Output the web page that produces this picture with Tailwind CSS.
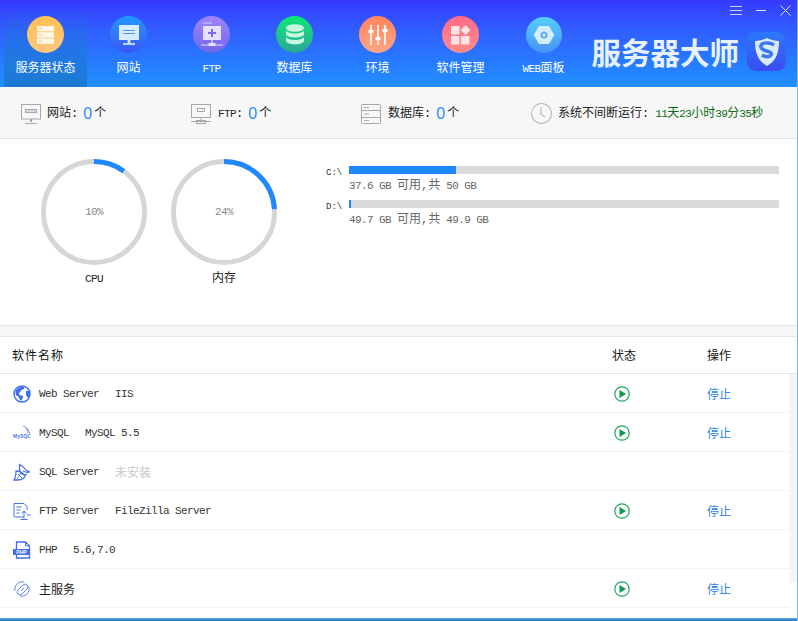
<!DOCTYPE html>
<html>
<head>
    <meta charset="utf-8">
    <title>服务器大师</title>
    <script src="https://cdn.jsdelivr.net/npm/@tailwindcss/browser@4"></script>
</head>
<body class="bg-white overflow-hidden">
<div class="w-[798px] h-[621px] relative flex flex-col border-r border-r-[#7fbdf0] font-['Liberation_Mono','Noto_Sans_CJK_SC',monospace] text-[11px] tracking-[-0.6px] text-[#333]">

    <!-- Header -->
    <div class="h-[87px] shrink-0 relative flex items-end pl-1 bg-gradient-to-b from-[#3838ff] to-[#2090ff] text-white">
        <div class="w-[83px] h-[80px] flex flex-col items-center pt-[9px] bg-gradient-to-b from-[#3838ff]/0 to-[#1c78d2]">
            <div class="w-[37px] h-[37px] rounded-full bg-gradient-to-b from-[#ffc04e] to-[#ffc680] flex items-center justify-center">
                <svg width="20" height="20" viewBox="0 0 20 20"><rect x="1" y="1" width="17" height="5.4" fill="#fff6e6"/><rect x="1" y="7.2" width="17" height="5.4" fill="#fff6e6"/><rect x="1" y="13.4" width="17" height="5.4" fill="#fff6e6"/><path d="M3 3.5h3M3 9.8h3M3 16h3" stroke="#ffc860" stroke-width="1"/></svg>
            </div>
            <span class="mt-[7px] text-[12px] tracking-normal leading-[18px]">服务器状态</span>
        </div>
        <div class="w-[83px] h-[80px] flex flex-col items-center pt-[9px]">
            <div class="w-[37px] h-[37px] rounded-full bg-gradient-to-b from-[#2098ff] to-[#3a55f5] flex items-center justify-center">
                <svg width="22" height="24" viewBox="0 0 22 24"><rect x="1" y="2" width="20" height="15" fill="#d8ecff"/><path d="M5 7.5h12M5 10.5h12" stroke="#4a90f0" stroke-width="1"/><rect x="9.6" y="17" width="2.8" height="3" fill="#d8ecff"/><rect x="5" y="20" width="12" height="2" fill="#b9d8ff"/></svg>
            </div>
            <span class="mt-[7px] text-[12px] tracking-normal leading-[18px]">网站</span>
        </div>
        <div class="w-[83px] h-[80px] flex flex-col items-center pt-[9px]">
            <div class="w-[37px] h-[37px] rounded-full bg-gradient-to-b from-[#a085ff] to-[#6c66e8] flex items-center justify-center">
                <svg width="24" height="26" viewBox="0 0 24 26"><path d="M3 1h9" stroke="#d8d0ff" stroke-width="1"/><rect x="3" y="4" width="18" height="14" fill="#e6e0ff"/><path d="M12 7v8M8 11h8" stroke="#7a6cf0" stroke-width="2"/><path d="M12 18v3M1 23h22" stroke="#e6e0ff" stroke-width="1.2"/><rect x="8.5" y="21" width="7" height="3" fill="#e6e0ff"/></svg>
            </div>
            <span class="mt-[7px] leading-[18px]">FTP</span>
        </div>
        <div class="w-[83px] h-[80px] flex flex-col items-center pt-[9px]">
            <div class="w-[37px] h-[37px] rounded-full bg-gradient-to-b from-[#0ce870] to-[#2aa59a] flex items-center justify-center">
                <svg width="20" height="24" viewBox="0 0 20 24" fill="#c8f7de"><ellipse cx="10" cy="5" rx="9" ry="3.8"/><path d="M1 7.5c2 4 16 4 18 0v4c-2 4-16 4-18 0z"/><path d="M1 14c2 4 16 4 18 0v4c-2 4.5-16 4.5-18 0z"/></svg>
            </div>
            <span class="mt-[7px] text-[12px] tracking-normal leading-[18px]">数据库</span>
        </div>
        <div class="w-[83px] h-[80px] flex flex-col items-center pt-[9px]">
            <div class="w-[37px] h-[37px] rounded-full bg-gradient-to-b from-[#ff8560] to-[#ffa585] flex items-center justify-center">
                <svg width="20" height="22" viewBox="0 0 20 22"><g stroke="#ffe8de" stroke-width="2"><path d="M3 1v20M10 1v20M17 1v20"/></g><g fill="#fff"><rect x="0.5" y="6" width="5" height="3.2"/><rect x="7.5" y="13" width="5" height="3.2"/><rect x="14.5" y="5" width="5" height="3.2"/></g></svg>
            </div>
            <span class="mt-[7px] text-[12px] tracking-normal leading-[18px]">环境</span>
        </div>
        <div class="w-[83px] h-[80px] flex flex-col items-center pt-[9px]">
            <div class="w-[37px] h-[37px] rounded-full bg-gradient-to-b from-[#ff6a85] to-[#ff8c8c] flex items-center justify-center">
                <svg width="20" height="20" viewBox="0 0 20 20" fill="#ffe3e6"><rect x="0" y="1" width="8.5" height="8.5"/><rect x="0" y="11" width="8.5" height="8.5"/><rect x="10" y="11" width="8.5" height="8.5"/><path d="M14.5 0l5 5-5 5-5-5z"/></svg>
            </div>
            <span class="mt-[7px] text-[12px] tracking-normal leading-[18px]">软件管理</span>
        </div>
        <div class="w-[83px] h-[80px] flex flex-col items-center pt-[9px]">
            <div class="w-[36px] h-[36px] mt-px rounded-full bg-gradient-to-b from-[#55d0ff] to-[#4a90f5] flex items-center justify-center">
                <svg width="22" height="20" viewBox="0 0 22 20"><path d="M6 1h10l5.4 9-5.4 9H6L.6 10z" fill="#d4edff"/><circle cx="11" cy="10" r="2.6" fill="none" stroke="#55aaf0" stroke-width="1.8"/></svg>
            </div>
            <span class="mt-[7px] leading-[18px]">WEB<span class="text-[12px] tracking-normal">面板</span></span>
        </div>

        <!-- Window buttons -->
        <div class="absolute top-[5px] right-[6px] flex items-center gap-[14px]">
            <svg width="12" height="10" viewBox="0 0 12 10"><path d="M0 .5h12M0 4.500h12M0 8.500h12" stroke="#c8d8ff" stroke-width="1"/></svg>
            <svg width="10" height="10" viewBox="0 0 10 10"><path d="M0 4.500h10" stroke="#dde6ff" stroke-width="1"/></svg>
            <svg width="11" height="11" viewBox="0 0 11 11"><path d="M.5.5l10 10M10.500.5l-10 10" stroke="#dde6ff" stroke-width="1"/></svg>
        </div>

        <!-- Brand -->
        <div class="absolute right-[11px] top-[32px] flex items-center gap-[8px]">
            <span class="font-['Noto_Sans_CJK_SC',sans-serif] font-bold text-[29.5px] tracking-normal leading-[38px] pb-[1px] text-[#e8f2ff]">服务器大师</span>
            <div class="w-[39px] h-[39px] rounded-[9px] bg-gradient-to-b from-[#2a78f8] to-[#3a4cf0] flex items-center justify-center">
                <svg width="26" height="30" viewBox="0 0 26 30"><path d="M13 1c4 2 8 3 12 3 0 12-3 20-12 25C4 24 1 16 1 4c4 0 8-1 12-3z" fill="#dbe9ff"/><path d="M20 8c-3-2-9-3-12-1-3 3 0 6 5 7 4 1 6 3 3 5-2 1-5 1-8-1" fill="none" stroke="#3a78ee" stroke-width="3.4"/></svg>
            </div>
        </div>
    </div>

    <!-- Summary -->
    <div class="h-[52px] shrink-0 relative bg-[#f7f7f7] border-b border-[#e2e2e2] flex items-center pt-[2px] text-[#222]">
        <div class="w-[191px] pl-[21px] flex items-center">
            <svg width="20" height="20" viewBox="0 0 20 20" fill="none" stroke="#a8a8a8"><rect x=".5" y=".5" width="19" height="14.5"/><rect x="4.5" y="5.5" width="11" height="3" fill="#d8d8d8"/><path d="M10 15v3" stroke-width="2"/><path d="M4 19.500h12" stroke-width="1"/></svg>
            <span class="ml-[6px] text-[12px] tracking-normal">网站:</span><span class="ml-[5px] w-[9px] font-['Liberation_Sans',sans-serif] text-[16px] tracking-normal leading-none text-[#2f8cff]">0</span><span class="ml-[2px] text-[12px] tracking-normal">个</span>
        </div>
        <div class="w-[170px] flex items-center">
            <svg width="20" height="20" viewBox="0 0 20 20" fill="none" stroke="#a8a8a8"><rect x=".5" y=".5" width="19" height="13"/><rect x="6.5" y="4.500" width="7" height="3"/><path d="M10 13.500v3M0 17.500h20"/><rect x="5.500" y="16.500" width="9" height="3"/></svg>
            <span class="ml-[7px]">FTP<span class="text-[12px] tracking-normal">:</span></span><span class="ml-[5px] w-[9px] font-['Liberation_Sans',sans-serif] text-[16px] tracking-normal leading-none text-[#2f8cff]">0</span><span class="ml-[2px] text-[12px] tracking-normal">个</span>
        </div>
        <div class="w-[170px] flex items-center">
            <svg width="20" height="20" viewBox="0 0 20 20" fill="none" stroke="#a8a8a8"><rect x=".5" y=".5" width="19" height="19" rx="1"/><path d="M0 6.500h20M0 13.500h20M3 3.500h5M3 10h5M3 16.500h5"/></svg>
            <span class="ml-[7px] text-[12px] tracking-normal">数据库:</span><span class="ml-[5px] w-[9px] font-['Liberation_Sans',sans-serif] text-[16px] tracking-normal leading-none text-[#2f8cff]">0</span><span class="ml-[2px] text-[12px] tracking-normal">个</span>
        </div>
        <div class="flex items-center">
            <svg width="21" height="21" viewBox="0 0 20 20" fill="none" stroke="#b4b4b4"><circle cx="10" cy="10" r="9.500"/><path d="M9.500 4v7l4 2.500"/></svg>
            <span class="ml-[6px] text-[12px] tracking-normal">系统不间断运行:</span>
            <span class="ml-[6px] text-[#0a6a14]">11<span class="text-[12px] tracking-normal">天</span>23<span class="text-[12px] tracking-normal">小时</span>39<span class="text-[12px] tracking-normal">分</span>35<span class="text-[12px] tracking-normal">秒</span></span>
        </div>
    </div>

    <!-- Charts and disks -->
    <div class="h-[186px] shrink-0 flex pl-[41px] pt-[20px]">
        <div class="w-[130px] flex flex-col items-start">
            <div class="w-[106px] h-[106px] relative flex items-center justify-center">
                <svg class="absolute inset-0" width="106" height="106" viewBox="0 0 106 106">
                    <circle cx="53" cy="53" r="50.500" fill="none" stroke="#d6d6d6" stroke-width="5"/>
                    <circle cx="53" cy="53" r="50.500" fill="none" stroke="#2088ff" stroke-width="5" stroke-dasharray="31.700 317.300" transform="rotate(-90 53 53)"/>
                </svg>
                <span class="text-[#888]">10%</span>
            </div>
            <span class="w-[106px] mt-[5px] text-center text-[#222] leading-[18px]">CPU</span>
        </div>
        <div class="w-[155px] flex flex-col items-start">
            <div class="w-[106px] h-[106px] relative flex items-center justify-center">
                <svg class="absolute inset-0" width="106" height="106" viewBox="0 0 106 106">
                    <circle cx="53" cy="53" r="50.500" fill="none" stroke="#d6d6d6" stroke-width="5"/>
                    <circle cx="53" cy="53" r="50.500" fill="none" stroke="#2088ff" stroke-width="5" stroke-dasharray="76.200 317.300" transform="rotate(-90 53 53)"/>
                </svg>
                <span class="text-[#888]">24%</span>
            </div>
            <span class="w-[106px] mt-[5px] text-center text-[12px] tracking-normal text-[#222] leading-[18px]">内存</span>
        </div>
        <div class="w-[453px] pt-[7px] flex flex-col gap-[7px]">
            <div class="flex">
                <span class="w-[23px] pt-px text-[9px] tracking-normal leading-[12px] text-[#333]">C:\</span>
                <div class="flex-1">
                    <div class="h-[8px] bg-[#dcdadc]"><div class="h-full bg-[#2088ff]" style="width: 24.9%"></div></div>
                    <p class="h-[19px] leading-[24px] text-[#666]">37.6 GB <span class="text-[12px] tracking-normal">可用,共</span> 50 GB</p>
                </div>
            </div>
            <div class="flex">
                <span class="w-[23px] pt-px text-[9px] tracking-normal leading-[12px] text-[#333]">D:\</span>
                <div class="flex-1">
                    <div class="h-[8px] bg-[#dcdadc]"><div class="h-full bg-[#2088ff]" style="width: 0.5%"></div></div>
                    <p class="h-[19px] leading-[24px] text-[#666]">49.7 GB <span class="text-[12px] tracking-normal">可用,共</span> 49.9 GB</p>
                </div>
            </div>
        </div>
    </div>

    <div class="h-[12px] shrink-0 bg-[#f6f6f6] border-y border-[#e6e6e6]"></div>

    <!-- Software table -->
    <div class="h-[37px] shrink-0 flex items-center pl-[12px] pt-[3px] border-b border-[#e4e4e4] text-[12px] tracking-normal text-[#111]">
        <span class="w-[600px] tracking-[1px]">软件名称</span>
        <span class="w-[95px]">状态</span>
        <span>操作</span>
    </div>
    <div class="flex-1 relative">
        <div class="absolute right-0 top-0 w-[8px] h-[209px] bg-[#f5f5f5]"></div>

        <div class="w-[789px] h-[39px] flex items-center pl-[13px] pt-[2px] border-b border-[#f3f3f3]">
            <svg class="w-[18px] h-[18px] shrink-0" viewBox="0 0 18 18"><circle cx="9" cy="9" r="8" fill="none" stroke="#3f6ff0" stroke-width="1.500"/><path d="M3 5c2-3 6-4 8-3 1 2-1 3-3 3 0 2-2 2-2 4 1 2 3 1 4 2 0 2-1 4-2 5-2-2-2-4-3-5-2 0-3-2-2-6zM13 6l3 0 1 4-2 3-2-3z" fill="#3f6ff0"/></svg>
            <span class="ml-[8px] w-[575px]">Web Server<span class="ml-[16px]">IIS</span></span>
            <svg class="w-[16px] h-[16px] shrink-0" viewBox="0 0 16 16"><circle cx="8" cy="8" r="7.200" fill="none" stroke="#1fa65f" stroke-width="1.200"/><path d="M5.500 4v8L12 8z" fill="#0c9a4c"/></svg>
            <span class="ml-[77px] mt-[3px] text-[12px] tracking-normal text-[#2a84f0]">停止</span>
        </div>

        <div class="w-[789px] h-[39px] flex items-center pl-[13px] pt-[2px] border-b border-[#f3f3f3]">
            <svg class="w-[18px] h-[18px] shrink-0" viewBox="0 0 18 18"><text x="0" y="13.500" font-size="5" letter-spacing="0" font-weight="bold" font-family="Liberation Sans" fill="#4a78ee">MySQL</text><path d="M10 2c4 1 6 4 7 9M12 3c2 2 3 4 3 6" fill="none" stroke="#6a8cf0" stroke-width=".900"/></svg>
            <span class="ml-[8px] w-[575px]">MySQL<span class="ml-[16px]">MySQL 5.5</span></span>
            <svg class="w-[16px] h-[16px] shrink-0" viewBox="0 0 16 16"><circle cx="8" cy="8" r="7.200" fill="none" stroke="#1fa65f" stroke-width="1.200"/><path d="M5.500 4v8L12 8z" fill="#0c9a4c"/></svg>
            <span class="ml-[77px] mt-[3px] text-[12px] tracking-normal text-[#2a84f0]">停止</span>
        </div>

        <div class="w-[789px] h-[39px] flex items-center pl-[13px] pt-[2px] border-b border-[#f3f3f3]">
            <svg class="w-[18px] h-[18px] shrink-0" viewBox="0 0 18 18" fill="none" stroke="#4a72e8" stroke-width="1.300"><path d="M6 1c2 1 5 3 7 6 2 1 3 2 4 2-3 1-5 0-7-1M7 1C6 5 6 9 9 11c2 1 4 1 5 0M3 8c3 0 7 2 9 5-1 3-5 4-8 4L1 17c2-3 2-6 2-9z"/><path d="M5 11l5 5M8 10l-4 6" stroke-width=".900"/></svg>
            <span class="ml-[8px]">SQL Server</span>
            <span class="ml-[16px] mt-[3px] text-[12px] tracking-normal text-[#c8c8c8]">未安装</span>
        </div>

        <div class="w-[789px] h-[39px] flex items-center pl-[13px] pt-[2px] border-b border-[#f3f3f3]">
            <svg class="w-[18px] h-[18px] shrink-0" viewBox="0 0 18 18" fill="none" stroke="#4a72e8" stroke-width="1"><path d="M11 15H2a1 1 0 0 1-1-1V1.500h10l3 3V8"/><path d="M3.500 5h5M3.500 8h4M3.500 11h3"/><path d="M11 16.500V9M8.500 11.500L11 9l2.500 2.500M14 13h3.500M7.500 17.500h7"/></svg>
            <span class="ml-[8px] w-[575px]">FTP Server<span class="ml-[16px]">FileZilla Server</span></span>
            <svg class="w-[16px] h-[16px] shrink-0" viewBox="0 0 16 16"><circle cx="8" cy="8" r="7.200" fill="none" stroke="#1fa65f" stroke-width="1.200"/><path d="M5.500 4v8L12 8z" fill="#0c9a4c"/></svg>
            <span class="ml-[77px] mt-[3px] text-[12px] tracking-normal text-[#2a84f0]">停止</span>
        </div>

        <div class="w-[789px] h-[39px] flex items-center pl-[13px] pt-[2px] border-b border-[#f3f3f3]">
            <svg class="w-[18px] h-[18px] shrink-0" viewBox="0 0 18 18"><path d="M3.500 8V1h9l4 4v12h-13v-3" fill="none" stroke="#3f6ff0" stroke-width="1.300"/><path d="M12.500 1v4h4" fill="none" stroke="#3f6ff0"/><rect x="0" y="8" width="17" height="6" fill="#3f6ff0"/><text x="8.500" y="12.800" text-anchor="middle" font-size="5" letter-spacing="0" font-weight="bold" font-family="Liberation Sans" fill="#fff">PHP</text></svg>
            <span class="ml-[8px]">PHP<span class="ml-[16px]">5.6,7.0</span></span>
        </div>

        <div class="w-[789px] h-[39px] flex items-center pl-[13px] pt-[2px] border-b border-[#f3f3f3]">
            <svg class="w-[18px] h-[18px] shrink-0" viewBox="0 0 18 18" fill="none" stroke="#5f86ef" stroke-width="1"><path d="M2 11a7.500 7.500 0 0 1 9-9M16 7a7.500 7.500 0 0 1-9 9"/><path d="M6 9l4-4a2.800 2.800 0 0 1 4 4l-5 5a2.800 2.800 0 0 1-4-4l1-1M8 11l3-3"/></svg>
            <span class="ml-[8px] mt-[3px] w-[575px] text-[12px] tracking-normal text-[#222]">主服务</span>
            <svg class="w-[16px] h-[16px] shrink-0" viewBox="0 0 16 16"><circle cx="8" cy="8" r="7.200" fill="none" stroke="#1fa65f" stroke-width="1.200"/><path d="M5.500 4v8L12 8z" fill="#0c9a4c"/></svg>
            <span class="ml-[77px] mt-[3px] text-[12px] tracking-normal text-[#2a84f0]">停止</span>
        </div>
    </div>

    <div class="h-[3px] shrink-0 bg-gradient-to-b from-[#58a8e4] to-[#2a70b0]"></div>
</div>
</body>
</html>
